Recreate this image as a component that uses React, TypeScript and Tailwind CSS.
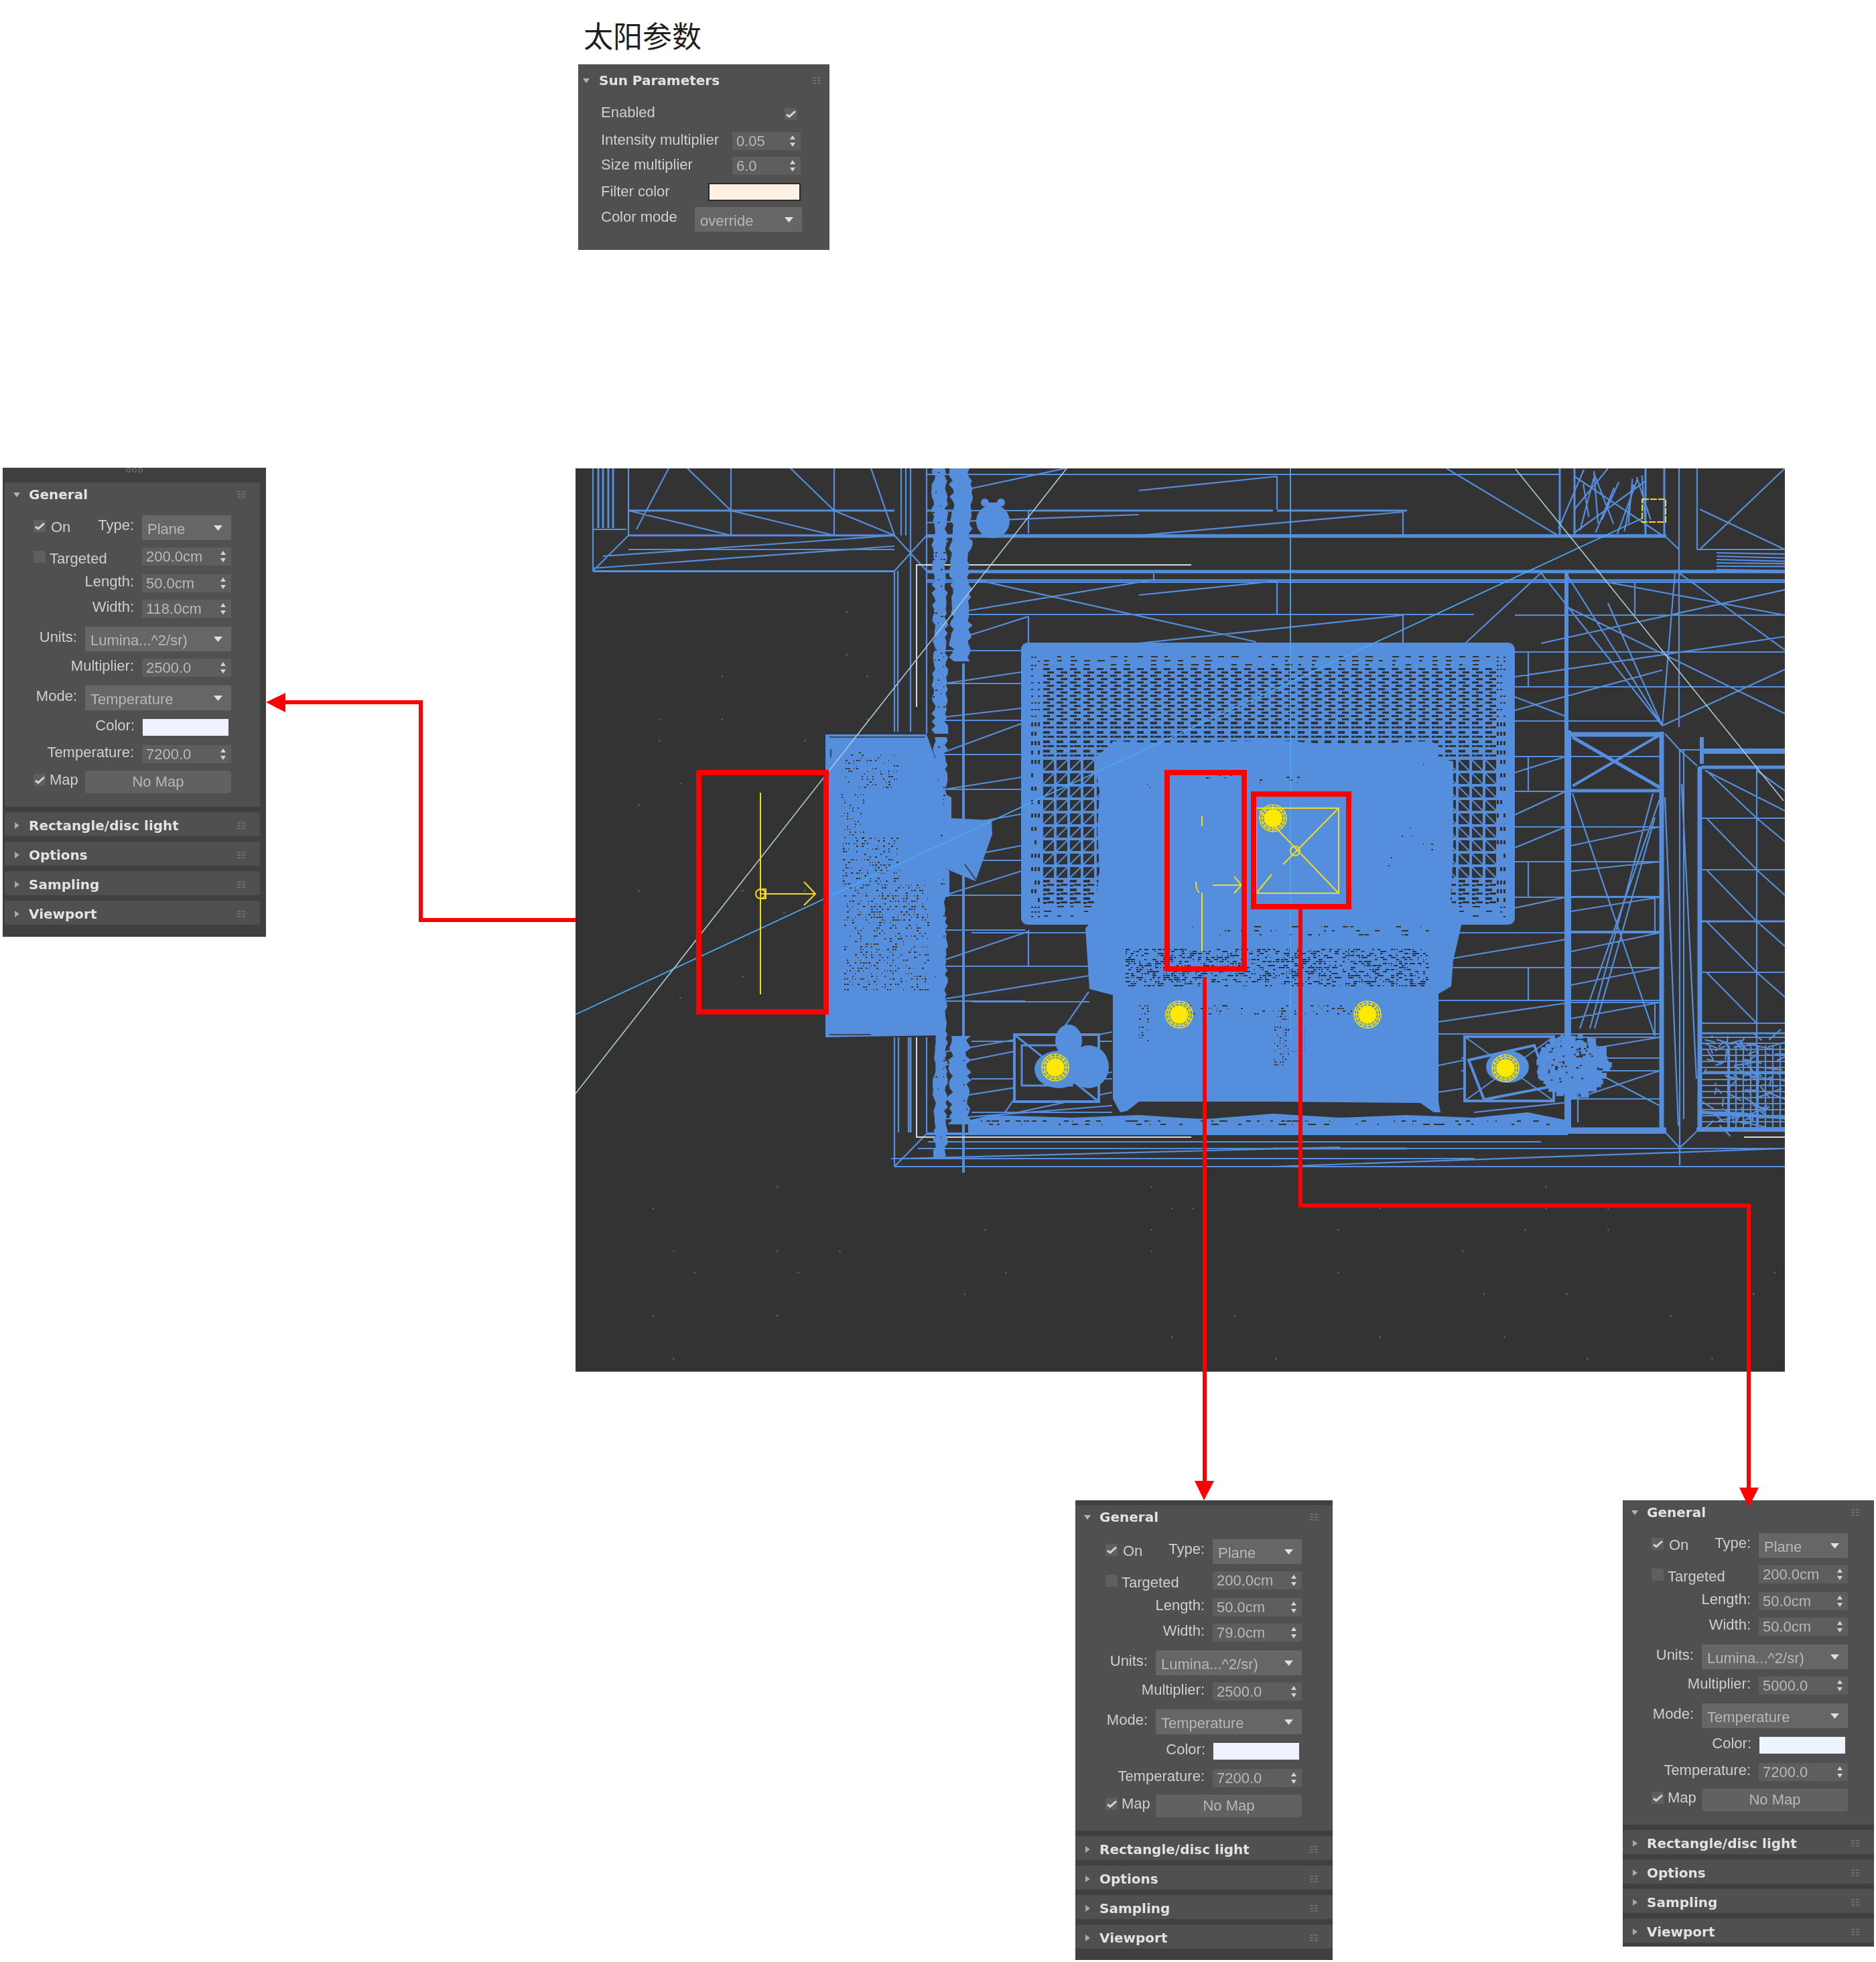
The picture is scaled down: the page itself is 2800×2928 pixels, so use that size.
import React from 'react';

const BLUE = '#568ede';
const DARK = '#333333';
const YEL = '#f2dc1e';

function mulberry(a: number) {
  return () => {
    a |= 0; a = (a + 0x6d2b79f5) | 0;
    let t = Math.imul(a ^ (a >>> 15), 1 | a);
    t = (t + Math.imul(t ^ (t >>> 7), 61 | t)) ^ t;
    return ((t ^ (t >>> 14)) >>> 0) / 4294967296;
  };
}
const rng = mulberry(42);

type L = [number, number, number, number];
const toD = (ls: L[]) => ls.map(([a, b, c, d]) => `M${a} ${b}L${c} ${d}`).join('');

const thin: L[] = [
  // top-left window frame
  [885, 699, 885, 852], [885, 852, 1335, 852], [885, 848, 1335, 815], [938, 699, 938, 799], [1091, 699, 1091, 799], [1245, 699, 1245, 799],
  [1026, 699, 1091, 762], [1180, 699, 1245, 762], [938, 762, 1091, 799], [1091, 762, 1245, 799], [1245, 762, 1335, 799],
  [998, 699, 950, 790], [1300, 699, 1335, 799], [885, 790, 935, 790], [885, 852, 938, 799], [938, 820, 1335, 820], [900, 830, 1335, 799],
  [1335, 799, 1383, 852], [1383, 799, 1335, 852], [1335, 852, 1335, 1092], [1340, 852, 1340, 1092], [1352, 699, 1352, 799], [1345, 699, 1345, 799], [1359, 699, 1359, 1092], [1383, 699, 1383, 1095],
  [1335, 1548, 1335, 1741], [1341, 1548, 1341, 1690], [1356, 1548, 1356, 1690], [1383, 1548, 1383, 1690], [1335, 1741, 1385, 1690],
  // upper room
  [1383, 708, 2328, 708], [1700, 732, 1906, 711], [1383, 780, 1700, 768], [1535, 762, 1535, 796], [1700, 799, 2094, 764], [1906, 711, 1906, 760], [2094, 764, 2094, 799], [1445, 730, 1590, 699], [1450, 762, 1560, 762],
  [1906, 867, 1906, 918], [2094, 918, 2094, 960], [1700, 888, 1906, 867], [1444, 917, 2200, 917], [1456, 865, 1875, 958], [1447, 911, 1723, 865], [1722, 856, 1722, 865], [1535, 920, 1535, 960], [1447, 948, 1535, 920], [1700, 960, 2094, 918], [1383, 869, 2664, 869],
  // right upper
  [2159, 699, 2325, 799], [2350, 795, 2456, 718], [2350, 711, 2481, 799], [2400, 699, 2350, 760], [2506, 699, 2506, 1085], [2533, 699, 2533, 820], [2484, 799, 2506, 820],
  [2537, 760, 2664, 820], [2537, 820, 2664, 699], [2533, 820, 2664, 820], [2187, 960, 2300, 855], [2337, 855, 2481, 1083], [2300, 855, 2481, 1083], [2500, 855, 2481, 1083], [2664, 970, 2506, 855], [2481, 1083, 2664, 999], [2481, 1083, 2400, 900], [2261, 1060, 2481, 1000], [2261, 1040, 2337, 1069], [2300, 960, 2664, 880], [2261, 973, 2664, 973], [2338, 1025, 2664, 1025], [2261, 1010, 2664, 950], [2337, 905, 2664, 1065],
  [2150, 869, 2340, 869], [2400, 869, 2664, 918], [2440, 918, 2440, 869], [2261, 918, 2664, 918],
  // big X in right room
  [2347, 1184, 2470, 1546], [2477, 1193, 2358, 1535], [2467, 1184, 2373, 1535], [2470, 1220, 2380, 1535], [2470, 1340, 2470, 1390], [2470, 1496, 2470, 1546],
  [2362, 1590, 2477, 1650], [2350, 1640, 2477, 1598], [2355, 1675, 2355, 1625],
  // wall
  [2485, 1095, 2507, 1119], [2507, 1119, 2533, 1143], [2485, 1190, 2505, 1680], [2510, 1170, 2532, 1610], [2507, 1119, 2507, 1739], [2485, 1689, 2507, 1713], [2532, 1689, 2507, 1713], [2513, 1119, 2513, 1670], [2507, 1119, 2540, 1119],
  // right room
  [2622, 1145, 2622, 1687], [2540, 1221, 2664, 1221], [2540, 1298, 2664, 1298], [2540, 1451, 2664, 1451], [2540, 1527, 2664, 1527],
  [2547, 1150, 2622, 1221], [2547, 1221, 2622, 1298], [2547, 1298, 2622, 1375], [2547, 1375, 2622, 1451], [2547, 1451, 2622, 1527],
  [2622, 1221, 2664, 1256], [2622, 1298, 2664, 1336], [2622, 1375, 2664, 1412], [2622, 1451, 2664, 1488], [2622, 1150, 2664, 1180], [2545, 1150, 2664, 1210],
  // lower band frames
  [1385, 1691, 2487, 1691], [1385, 1704, 2300, 1704], [1345, 1729, 2000, 1712], [1900, 1741, 2664, 1714], [1335, 1741, 2664, 1741], [1370, 1714, 2664, 1714], [1330, 1729, 2200, 1729],
  // lower-left room
  [1535, 1388, 1535, 1442], [1408, 1433, 1535, 1390], [1408, 1491, 1626, 1456], [1408, 1590, 1660, 1540], [1408, 1570, 1512, 1552], [1408, 1640, 1660, 1600], [1520, 1660, 1660, 1630], [1500, 1660, 1625, 1480], [1408, 1670, 1660, 1650],
  [2169, 1430, 2337, 1402], [2147, 1525, 2337, 1497], [2281, 1444, 2281, 1493], [2147, 1590, 2340, 1550], [2147, 1630, 2340, 1600], [2200, 1660, 2340, 1645],
  [2281, 973, 2281, 1025], [2281, 1129, 2281, 1181], [2281, 1286, 2281, 1339], [2261, 1153, 2337, 1129], [2261, 1216, 2337, 1181], [2261, 1265, 2337, 1234], [2261, 1355, 2337, 1339],
  [2345, 1360, 2477, 1339], [2345, 1262, 2477, 1234], [2345, 1300, 2477, 1286], [2345, 1420, 2477, 1392], [2345, 1470, 2477, 1444], [2345, 1520, 2477, 1496], [2345, 1570, 2477, 1548],
];
const mid: L[] = [
  [938, 762, 1335, 762], [938, 799, 1335, 799], [1383, 799, 2487, 799], [1383, 762, 1450, 762], [1535, 762, 1900, 762], [1906, 762, 2100, 762],
  [1383, 843, 1400, 843], [2337, 855, 2337, 1090], [2328, 699, 2328, 799], [2350, 699, 2350, 799], [2456, 699, 2456, 799], [2484, 699, 2484, 799],
  [2345, 1096, 2480, 1096], [2345, 1180, 2480, 1180], [2540, 1375, 2664, 1375], [2535, 1145, 2664, 1145], [2540, 1542, 2664, 1542],
  [1438, 991, 1438, 1750], [1359, 1548, 1359, 1690], [2147, 1684, 2487, 1684],
  [893, 699, 893, 788], [900, 699, 900, 788], [908, 699, 908, 788], [915, 699, 915, 788],
];
for (const y of [971, 1020, 1075, 1126, 1178, 1284, 1336, 1388, 1442, 1494]) thin.push([1400, y, 1530, y]);
for (const [a, b] of [[1020, 1003], [1070, 1057], [1122, 1080], [1178, 1160], [1235, 1215], [1284, 1262], [1336, 1300]]) thin.push([1410, a, 1524, b]);
for (const y of [1025, 1076, 1129, 1181, 1234, 1286, 1339, 1392, 1444, 1493, 1543, 1579, 1598]) thin.push([2181, y, 2477, y]);
for (const y of [1234, 1286, 1338, 1390, 1444, 1496, 1548, 1579, 1598, 1640]) thin.push([2345, y, 2477, y]);
for (const y of [1392, 1444, 1493, 1543]) thin.push([2147, y, 2337, y]);
for (const y of [1554, 1610, 1660]) thin.push([1450, y, 1660, y]);
for (const y of [1392, 1442, 1495]) thin.push([1450, y, 1626, y]);

// messy cluster at the right room base and top
const clusterThin: L[] = [];
for (let i = 0; i < 90; i++) {
  const x = 2540 + rng() * 120, y = 1545 + rng() * 135;
  clusterThin.push([x, y, x + (rng() - 0.3) * 60, y + (rng() - 0.5) * 34]);
}
for (let x = 2580; x < 2664; x += 11) clusterThin.push([x, 1560, x, 1685]);
for (let y = 1548; y < 1688; y += 9) clusterThin.push([2540, y, 2664, y]);
for (let y = 825; y < 855; y += 5) clusterThin.push([2562, y, 2664, y + rng() * 3]);
for (let i = 0; i < 12; i++) {
  const x = 2350 + rng() * 120;
  clusterThin.push([x, 699 + rng() * 30, x - 40 + rng() * 70, 799 - rng() * 30]);
}

const thick: [number, number, number, number, number][] = [
  [1383, 800, 2487, 800, 5],
  [1383, 853, 2664, 853, 5],
  [1383, 866, 2664, 866, 3],
  [2340, 1090, 2340, 1691, 10],
  [2338, 855, 2338, 1090, 6],
  [2480, 1092, 2480, 1688, 7],
  [2345, 1096, 2480, 1096, 7],
  [2345, 1180, 2480, 1180, 5],
  [2347, 1100, 2477, 1175, 5],
  [2347, 1173, 2477, 1097, 4],
  [2537, 1145, 2537, 1688, 7],
  [2532, 1686, 2664, 1686, 6],
  [2540, 1121, 2664, 1121, 8],
  [2540, 1145, 2664, 1145, 5],
  [2540, 1100, 2540, 1140, 6],
  [2340, 1688, 2487, 1688, 6],
  [1383, 1692, 2340, 1692, 4],
  [1438, 990, 1438, 1750, 4],
  [885, 853, 1335, 853, 2],
  [1900, 1714, 2100, 1714, 3],
  [2580, 1560, 2580, 1685, 4],
  [2540, 1660, 2664, 1668, 5],
  [2545, 1600, 2664, 1600, 3],
];

// Mesh of the rug: blue base, dark pieces on it, pale diagonals
function buildMesh() {
  let cells = '';
  const diag: L[] = [];
  let y = 978;
  while (y < 1368) {
    const h = y < 995 ? 6 : y < 1075 ? 10 : y < 1130 ? 14 : y < 1300 ? 20 : y < 1340 ? 13 : 7;
    // narrow dotted columns along the sides
    for (const x0 of [1539, 2234]) {
      for (let k = 0; k < 3; k++) {
        if (rng() < 0.7) cells += `M${x0 + k * 5} ${y + 2}h3v${h > 12 ? 6 : 2}h-3z`;
      }
    }
    for (let x = 1555; x < 2232; x += 20) {
      if (h < 8) {
        if (rng() < 0.7) cells += `M${x + 3} ${y + 1}h${4 + Math.floor(rng() * 8)}v2h-12z`.replace('h-12z', 'H' + (x + 3) + 'z');
      } else if (h < 16) {
        cells += `M${x + 2} ${y + 1}h10v${h > 11 ? 4 : 3}h-10z`;
        cells += `M${x + 8} ${y + Math.floor(h / 2) + 1}h10v3h-10z`;
        if (h > 11) cells += `M${x + 2} ${y + 8}h5v3h-5z`;
      } else {
        cells += `M${x + 2} ${y + 2}h16v${h - 4}h-16z`;
        if (x < 1890) diag.push([x + 2, y + h - 2, x + 18, y + 2]);
        else diag.push([x + 2, y + 2, x + 18, y + h - 2]);
      }
    }
    y += h;
  }
  return { cells, diag };
}
const mesh = buildMesh();

function speck(x0: number, x1: number, y0: number, y1: number, density: number, maxW = 6, sy = 4) {
  let d = '';
  for (let y = y0; y < y1; y += sy) {
    for (let x = x0; x < x1; x += 4) {
      if (rng() < density) {
        const w = 1 + Math.floor(rng() * maxW);
        d += `M${x} ${y}h${w}v2h-${w}z`;
      }
    }
  }
  return d;
}
const speckD =
  speck(1262, 1340, 1122, 1175, 0.24, 3, 4) +
  speck(1256, 1292, 1185, 1250, 0.2, 2, 4) +
  speck(1258, 1345, 1250, 1320, 0.26, 3, 4) +
  speck(1260, 1385, 1320, 1480, 0.3, 3, 4) +
  speck(1680, 2130, 1416, 1472, 0.36, 6, 3) +
  speck(1780, 2130, 1382, 1400, 0.1, 10, 6) +
  speck(1740, 2050, 1500, 1516, 0.22, 4) +
  speck(1902, 1925, 1516, 1590, 0.35, 3) +
  speck(1700, 1716, 1500, 1560, 0.28, 3) +
  speck(1880, 1960, 1155, 1170, 0.06, 6) +
  speck(1800, 1850, 1152, 1162, 0.1, 3) +
  speck(1700, 1730, 1170, 1190, 0.05, 2) +
  speck(2120, 2160, 1140, 1150, 0.04, 2) +
  speck(2060, 2160, 1235, 1300, 0.01, 3) +
  speck(1460, 1880, 1672, 1682, 0.18, 9, 5) +
  speck(1880, 2320, 1672, 1682, 0.18, 9, 5) +
  speck(1392, 1414, 699, 1095, 0.1, 3, 5) +
  speck(1396, 1412, 1096, 1735, 0.06, 3, 6) +
  speck(1418, 1448, 1546, 1682, 0.03, 3, 6);

function wobble(xc: number, y1: number, y2: number, w: number, step = 6) {
  const left: string[] = [];
  const right: string[] = [];
  for (let y = y1; y <= y2; y += step) {
    left.push(`${xc - (w / 2) * (rng() * 0.5 + 0.5)},${y}`);
    right.unshift(`${xc + (w / 2) * (rng() * 0.5 + 0.5)},${y}`);
  }
  return [...left, ...right].join(' ');
}
const blobs = [
  wobble(1403, 699, 1100, 26),
  wobble(1434, 699, 990, 36),
  wobble(1403, 1100, 1735, 24),
  wobble(1432, 1546, 1682, 36),
];

const plant = (() => {
  let d = '';
  for (let i = 0; i < 300; i++) {
    const a = rng() * Math.PI * 2;
    const r = Math.sqrt(rng()) * 44;
    const x = 2345 + Math.cos(a) * r * 1.2;
    const y = 1585 + Math.sin(a) * r;
    const s = 4 + rng() * 8;
    d += `M${x} ${y}h${s}v${s}h-${s}z`;
  }
  return d;
})();
const plantHoles = (() => {
  let d = '';
  for (let i = 0; i < 24; i++) {
    const x = 2310 + rng() * 70, y = 1560 + rng() * 55;
    d += `M${x} ${y}h3v2h-3z`;
  }
  return d;
})();

const dots = (() => {
  const out: [number, number][] = [];
  for (let i = 0; i < 70; i++) {
    const bottom = rng() < 0.6;
    const x = bottom ? 880 + Math.floor(rng() * 58) * 31 : 890 + Math.floor(rng() * 14) * 31;
    const y = bottom ? 1770 + Math.floor(rng() * 9) * 32 : 880 + Math.floor(rng() * 20) * 32;
    out.push([x, y]);
  }
  return out;
})();

function Sun({ x, y }: { x: number; y: number }) {
  const spokes = Array.from({ length: 16 }, (_, i) => {
    const a = (i * Math.PI) / 8;
    return <line key={i} x1={x} y1={y} x2={x + Math.cos(a) * 20} y2={y + Math.sin(a) * 20} />;
  });
  return (
    <g stroke="#f4e000" strokeWidth={1.6} fill="none">
      {spokes}
      <circle cx={x} cy={y} r={20} />
      <circle cx={x} cy={y} r={16.5} />
      <circle cx={x} cy={y} r={13} fill="#ffe900" />
    </g>
  );
}

function Viewport() {
  return (
    <svg viewBox="859 699 1805 1348" className="block w-[1805px] h-[1348px] overflow-hidden">
      <rect x={859} y={699} width={1805} height={1348} fill={DARK} />
      <g fill="#525252">
        {dots.map(([x, y], i) => (
          <rect key={i} x={x} y={y} width={3} height={3} />
        ))}
      </g>
      <path d={toD(thin)} stroke={BLUE} strokeWidth={2.2} fill="none" />
      <path d={toD(clusterThin)} stroke={BLUE} strokeWidth={2.2} fill="none" />
      <path d={toD(mid)} stroke={BLUE} strokeWidth={3} fill="none" />
      {thick.map(([a, b, c, d, w], i) => (
        <line key={i} x1={a} y1={b} x2={c} y2={d} stroke={BLUE} strokeWidth={w} />
      ))}

      {/* white L guides */}
      <path d="M1368 1055V843H1778M1368 1548V1697H1778M2603 1697H2664" stroke="#d8d8d8" strokeWidth={2} fill="none" />

      {/* rug */}
      <rect x={1524} y={959} width={737} height={421} rx={10} fill={BLUE} />
      <path d={mesh.cells} fill={DARK} />
      <path d={toD(mesh.diag)} stroke={BLUE} strokeWidth={2} fill="none" />

      {/* body of bed */}
      <polygon
        fill={BLUE}
        points="1662,1106 1700,1108 1800,1108 1900,1104 2000,1112 2135,1106 2147,1112 2147,1132 2169,1136 2169,1279 2165,1342 2181,1381 2169,1434 2166,1472 2147,1483 2147,1644 2150,1660 2140,1660 2120,1646 1900,1644 1700,1644 1682,1658 1672,1660 1661,1640 1661,1485 1626,1476 1620,1385 1632,1373 1641,1300 1638,1240 1641,1180 1632,1132 1650,1118"
      />
      {/* side block */}
      <polygon
        fill={BLUE}
        points="1232,1096 1383,1096 1398,1138 1398,1178 1420,1190 1420,1221 1480,1224 1481,1245 1456,1315 1415,1298 1398,1286 1417,1300 1417,1338 1398,1340 1410,1400 1408,1545 1232,1548"
      />
      <path d="M1238 1100H1380M1238 1544H1300M1240 1118V1130M1440 1290L1458 1315" stroke={DARK} strokeWidth={1.5} fill="none" />
      {blobs.map((p, i) => (
        <polygon key={i} points={p} fill={BLUE} />
      ))}

      {/* bottom band */}
      <polygon
        fill={BLUE}
        points="1445,1672 1480,1664 1600,1668 1700,1664 1760,1668 1800,1670 1900,1662 2000,1668 2100,1664 2200,1668 2280,1660 2340,1672 2340,1690 1445,1690"
      />

      {/* pot */}
      <circle cx={1482} cy={778} r={25} fill={BLUE} />
      <circle cx={1470} cy={750} r={6} fill={BLUE} />
      <circle cx={1494} cy={750} r={6} fill={BLUE} />
      <rect x={1474} y={750} width={16} height={8} fill={BLUE} />

      {/* left nightstand */}
      <rect x={1514} y={1544} width={126} height={100} fill={DARK} stroke={BLUE} strokeWidth={4} />
      <path d="M1514 1544L1640 1644M1525 1560H1600V1620H1525Z" stroke={BLUE} strokeWidth={3} fill="none" />
      <ellipse cx={1595} cy={1553} rx={20} ry={24} fill={BLUE} />
      <ellipse cx={1625} cy={1592} rx={30} ry={32} fill={BLUE} />
      <ellipse cx={1580} cy={1596} rx={36} ry={28} fill={BLUE} />

      {/* right nightstand */}
      <rect x={2186} y={1547} width={133} height={96} fill={DARK} stroke={BLUE} strokeWidth={4} />
      <path d="M2186 1547L2319 1643M2186 1643L2319 1547" stroke={BLUE} strokeWidth={2} />
      <polygon points="2192,1582 2290,1560 2312,1622 2215,1641" fill="none" stroke={BLUE} strokeWidth={4} />
      <ellipse cx={2250} cy={1592} rx={32} ry={24} fill={BLUE} />
      <path d={plant} fill={BLUE} />
      <path d="M2345 1585L2394 1570L2350 1610Z" fill={BLUE} />
      <path d={plantHoles} fill={DARK} />

      {/* speckle */}
      <path d={speckD} fill={DARK} />

      {/* cyan and pale rays */}
      <path d="M859 1514L2450 774M1926 699V1550" stroke="#4aa8ee" strokeWidth={1.8} fill="none" />
      <path d="M859 1632L1592 699M2262 700L2662 1195" stroke="#a8ccd2" strokeWidth={1.6} fill="none" />
      <rect x={1916} y={1535} width={31} height={34} fill="none" stroke="#5a78d0" strokeWidth={1.4} />

      {/* yellow lights */}
      <g stroke={YEL} strokeWidth={2} fill="none">
        <path d="M1135 1183V1484M1135 1334H1216M1200 1316L1217 1334L1200 1351" />
        <circle cx={1135} cy={1334} r={7} />
        <rect x={1135} y={1327} width={8} height={14} />
        <path d="M1794 1218V1233M1794 1332V1421M1785 1316Q1785 1328 1790 1332M1810 1321H1852M1842 1308L1853 1321L1842 1333" />
        <rect x={1875} y={1206} width={123} height={127} />
        <path d="M1998 1206L1935 1270L1915 1290M1998 1333L1880 1210M1875 1333L1898 1305" />
        <circle cx={1933} cy={1270} r={7} />
        <rect x={2451} y={745} width={35} height={34} strokeDasharray="10 2" />
      </g>
      <Sun x={1575} y={1593} />
      <Sun x={1760} y={1514} />
      <Sun x={2041} y={1514} />
      <Sun x={2247} y={1594} />
      <Sun x={1900} y={1221} />
    </svg>
  );
}

function Overlay() {
  return (
    <svg viewBox="0 0 2800 2928" className="absolute inset-0 w-[2800px] h-[2928px] pointer-events-none">
      <g fill="none" stroke="#ff0000">
        <g strokeWidth={8}>
          <rect x={1043} y={1153} width={190} height={357} />
          <rect x={1742} y={1153} width={115} height={293} />
          <rect x={1871} y={1185} width={142} height={168} />
        </g>
        <g strokeWidth={6}>
          <path d="M859 1373H628V1048H420" />
          <path d="M1798 1458V2215" />
          <path d="M1941 1357V1799H2610V2225" />
        </g>
      </g>
      <g fill="#ff0000">
        <polygon points="397,1048 426,1034 426,1063" />
        <polygon points="1797,2239 1783,2210 1812,2210" />
        <polygon points="2610,2249 2596,2220 2625,2220" />
      </g>
    </svg>
  );
}

const sans = "font-['Liberation_Sans','DejaVu_Sans',sans-serif]";
const labelCls = `text-[22px] leading-none text-[#cfcfcf] whitespace-nowrap ${sans}`;
const valueCls = `text-[22px] leading-none text-[#b8b8b8] whitespace-nowrap ${sans}`;

function Arrows() {
  return (
    <svg width="10" height="17" viewBox="0 0 10 17" className="shrink-0">
      <path d="M5 0L9 6H1ZM5 17L1 11H9Z" fill="#d4d4d4" />
    </svg>
  );
}
function Caret() {
  return (
    <svg width="13" height="8" viewBox="0 0 13 8" className="shrink-0">
      <path d="M0 0H13L6.5 8Z" fill="#e0e0e0" />
    </svg>
  );
}
function Grip() {
  return (
    <svg width="12" height="12" viewBox="0 0 12 12" className="shrink-0">
      <path d="M0 1h5v2H0zM7 1h5v2H7zM0 5h5v2H0zM7 5h5v2H7zM0 9h5v2H0zM7 9h5v2H7z" fill="#6c6c6c" />
    </svg>
  );
}
function Check({ on = true, cls = '' }: { on?: boolean; cls?: string }) {
  return (
    <div className={`w-[18px] h-[18px] shrink-0 bg-[#5f5f5f] flex items-center justify-center ${cls}`}>
      {on && (
        <svg width="15" height="12" viewBox="0 0 15 12">
          <path d="M1 7L5 10L14 2" stroke="#d4d4d4" strokeWidth={3} fill="none" />
        </svg>
      )}
    </div>
  );
}
function Spin({ value, w = 'w-[133px]' }: { value: string; w?: string }) {
  return (
    <div className={`${w} h-[27px] shrink-0 bg-[#5e5e5e] flex items-center justify-between pl-[6px] pr-[7px]`}>
      <span className={valueCls}>{value}</span>
      <Arrows />
    </div>
  );
}
function Drop({ value, w = 'w-[133px]' }: { value: string; w?: string }) {
  return (
    <div className={`${w} h-[37px] shrink-0 bg-[#666666] flex items-center justify-between pl-[8px] pr-[13px]`}>
      <span className={`${valueCls} pt-[4px]`}>{value}</span>
      <Caret />
    </div>
  );
}
function Tri({ open }: { open?: boolean }) {
  return open ? (
    <svg width="10" height="7" viewBox="0 0 10 7" className="shrink-0">
      <path d="M0 0H10L5 7Z" fill="#b4b4b4" />
    </svg>
  ) : (
    <svg width="10" height="10" viewBox="0 0 10 10" className="shrink-0">
      <path d="M2 0L9 5L2 10Z" fill="#a8a8a8" />
    </svg>
  );
}
function Title({ text, open, cls = '' }: { text: string; open?: boolean; cls?: string }) {
  return (
    <div className={`h-[36px] flex items-center pl-[13px] pr-[22px] ${cls}`}>
      <Tri open={open} />
      <span className="ml-[13px] text-[20px] leading-none font-bold text-[#e2e2e2] whitespace-nowrap font-['DejaVu_Sans',sans-serif]">{text}</span>
      <span className="ml-auto">
        <Grip />
      </span>
    </div>
  );
}

function Row({ label, children, cls = '' }: { label: string; children: React.ReactNode; cls?: string }) {
  return (
    <div className={`flex items-center justify-end gap-[12px] ${cls}`}>
      <span className={`${labelCls} mb-[5px]`}>{label}</span>
      {children}
    </div>
  );
}

type PanelProps = {
  outer: string;
  sections: string;
  content: string;
  top?: React.ReactNode;
  width2: string;
  mult: string;
  generalH: string;
};
function LightPanel({ outer, sections, content, top, width2, mult, generalH }: PanelProps) {
  const sec = 'bg-[#505050] rounded-[3px]';
  return (
    <div className={outer}>
      {top}
      <div className={`${sections} flex flex-col gap-[8px]`}>
        <div className={`${sec} ${generalH}`}>
          <div className="blur-[0.7px]">
            <Title text="General" open />
            <div className={content}>
              <div className="flex items-center mt-[13px] h-[37px]">
                <Check cls="mb-[5px]" />
                <span className={`${labelCls} ml-[8px] mb-[2px]`}>On</span>
                <span className={`${labelCls} ml-auto mr-[12px] mb-[8px]`}>Type:</span>
                <Drop value="Plane" />
              </div>
              <div className="flex items-center mt-[11px] h-[27px]">
                <Check on={false} />
                <span className={`${labelCls} ml-[6px] pt-[6px]`}>Targeted</span>
                <span className="ml-auto">
                  <Spin value="200.0cm" />
                </span>
              </div>
              <Row label="Length:" cls="mt-[13px]">
                <Spin value="50.0cm" />
              </Row>
              <Row label="Width:" cls="mt-[11px]">
                <Spin value={width2} />
              </Row>
              <Row label="Units:" cls="mt-[13px]">
                <Drop value="Lumina...^2/sr)" w="w-[218px]" />
              </Row>
              <Row label="Multiplier:" cls="mt-[11px]">
                <Spin value={mult} />
              </Row>
              <Row label="Mode:" cls="mt-[13px]">
                <Drop value="Temperature" w="w-[218px]" />
              </Row>
              <Row label="Color:" cls="mt-[12px] pr-[4px]">
                <div className="w-[128px] h-[25px] bg-[#eef3ff]" />
              </Row>
              <Row label="Temperature:" cls="mt-[13px]">
                <Spin value="7200.0" />
              </Row>
              <div className="flex items-center mt-[11px] h-[34px]">
                <Check cls="mb-[6px]" />
                <span className={`${labelCls} ml-[6px] mb-[6px]`}>Map</span>
                <div className={`ml-auto w-[218px] h-[34px] rounded-[4px] bg-[#616161] flex items-center justify-center ${valueCls}`}>No Map</div>
              </div>
            </div>
          </div>
        </div>
        {['Rectangle/disc light', 'Options', 'Sampling', 'Viewport'].map((t) => (
          <div key={t} className={`${sec} h-[36px] blur-[0.7px]`}>
            <Title text={t} cls="pt-[3px]" />
          </div>
        ))}
      </div>
    </div>
  );
}

function SunPanel() {
  return (
    <div className="w-[375px] h-[277px] bg-[#505050]">
      <div className="blur-[0.7px]">
        <div className="h-[48px] flex items-center pl-[7px] pr-[13px]">
          <Tri open />
          <span className="ml-[14px] text-[20px] leading-none font-bold text-[#e2e2e2] whitespace-nowrap font-['DejaVu_Sans',sans-serif]">Sun Parameters</span>
          <span className="ml-auto">
            <Grip />
          </span>
        </div>
        <div className="pl-[34px] pr-[43px]">
          <div className="mt-[16px] h-[19px] flex items-center justify-between pr-[6px]">
            <span className={`${labelCls} mb-[3px]`}>Enabled</span>
            <Check />
          </div>
          <div className="mt-[18px] h-[27px] flex items-center justify-between">
            <span className={`${labelCls} mb-[4px]`}>Intensity multiplier</span>
            <Spin value="0.05" w="w-[102px]" />
          </div>
          <div className="mt-[10px] h-[27px] flex items-center justify-between">
            <span className={`${labelCls} mb-[4px]`}>Size multiplier</span>
            <Spin value="6.0" w="w-[102px]" />
          </div>
          <div className="mt-[12px] h-[27px] flex items-center justify-between">
            <span className={`${labelCls} mb-[2px]`}>Filter color</span>
            <div className="w-[138px] h-[27px] bg-[#fff0e6] border-2 border-[#2a2a2a]" />
          </div>
          <div className="mt-[9px] h-[37px] flex items-center justify-between">
            <span className={`${labelCls} mb-[8px]`}>Color mode</span>
            <span className="-mr-[2px]">
              <Drop value="override" w="w-[160px]" />
            </span>
          </div>
        </div>
      </div>
    </div>
  );
}

export default function App() {
  return (
    <div className="relative w-[2800px] h-[2928px] bg-white overflow-hidden">
      <section className="pl-[863px]">
        <h1 className="h-[96px] pl-[8px] pt-[21px] text-[44px] leading-[62px] font-normal text-[#1f1f1f] font-['Noto_Sans_CJK_SC',sans-serif]">太阳参数</h1>
        <SunPanel />
      </section>

      <section className="mt-[325px] pl-[4px] flex items-start">
        <LightPanel
          outer="w-[393px] h-[700px] bg-[#404040]"
          top={
            <div className="h-[22px] flex justify-center gap-[2px]">
              <span className="w-[7px] h-[7px] rounded-full border border-[#888888]" />
              <span className="w-[7px] h-[7px] rounded-full border border-[#888888]" />
              <span className="w-[7px] h-[7px] rounded-full border border-[#888888]" />
            </div>
          }
          sections="pl-[3px] pr-[9px]"
          content="pl-[43px] w-[338px]"
          width2="118.0cm"
          mult="2500.0"
          generalH="h-[484px]"
        />
        <div className="ml-[462px] mt-[1px]">
          <Viewport />
        </div>
      </section>

      <section className="mt-[192px] pl-[1605px] flex items-start gap-[433px]">
        <LightPanel
          outer="w-[384px] h-[686px] bg-[#404040] pt-[7px]"
          sections=""
          content="pl-[45px] pt-[2px] w-[338px]"
          width2="79.0cm"
          mult="2500.0"
          generalH="h-[486px]"
        />
        <LightPanel
          outer="w-[375px] h-[666px] bg-[#404040]"
          sections=""
          content="pl-[43px] w-[336px]"
          width2="50.0cm"
          mult="5000.0"
          generalH="h-[484px]"
        />
      </section>

      <Overlay />
    </div>
  );
}
